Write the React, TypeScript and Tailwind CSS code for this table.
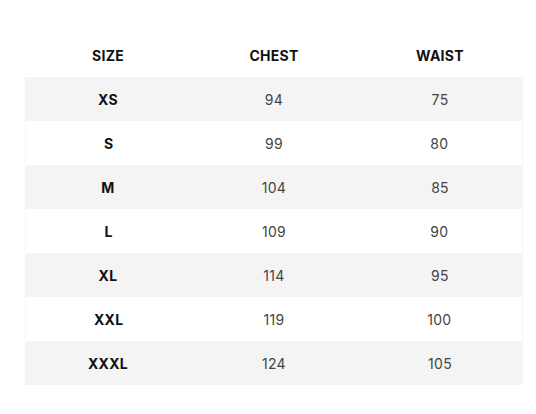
const rows = [
  { size: "XS", chest: "94", waist: "75" },
  { size: "S", chest: "99", waist: "80" },
  { size: "M", chest: "104", waist: "85" },
  { size: "L", chest: "109", waist: "90" },
  { size: "XL", chest: "114", waist: "95" },
  { size: "XXL", chest: "119", waist: "100" },
  { size: "XXXL", chest: "124", waist: "105" },
];

export default function App() {
  return (
    <div
      className="w-[536px] h-[414px] bg-white pt-[33px] px-[25px]"
      style={{ fontFamily: "Inter, 'Open Sans', sans-serif" }}
    >
      <div className="w-[498px]">
        {/* header */}
        <div className="grid grid-cols-3 h-[44px] items-center text-center text-[14px] tracking-[0.02em] font-bold text-[#111]">
          <div>SIZE</div>
          <div>CHEST</div>
          <div>WAIST</div>
        </div>
        {rows.map((r, i) => (
          <div
            key={r.size}
            className={
              i % 2 === 0
                ? "grid grid-cols-3 h-[44px] items-center text-center text-[14px] tracking-[0.02em] bg-[#f4f4f4]"
                : "grid grid-cols-3 h-[44px] items-center text-center text-[14px] tracking-[0.02em] bg-white border-x border-[#f7f7f7]"
            }
          >
            <div className="font-bold text-[#111]">{r.size}</div>
            <div className="text-[#444]">{r.chest}</div>
            <div className="text-[#444]">{r.waist}</div>
          </div>
        ))}
      </div>
    </div>
  );
}
